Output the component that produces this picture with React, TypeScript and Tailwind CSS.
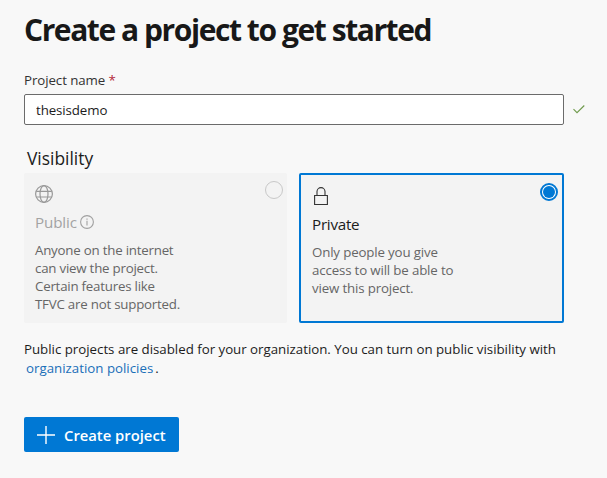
import React from 'react';

function GlobeIcon() {
  return (
    <svg width="18" height="18" viewBox="0 0 18 18" fill="none" stroke="#999999" strokeWidth="1.2">
      <circle cx="9" cy="9" r="8.4" />
      <ellipse cx="9" cy="9" rx="4" ry="8.4" />
      <path d="M1.2 6.4h15.6M1.2 12h15.6" />
    </svg>
  );
}

function InfoIcon() {
  return (
    <svg width="14" height="14" viewBox="0 0 14 14" fill="none" stroke="#a0a0a0" strokeWidth="1.1">
      <circle cx="7" cy="7" r="6.4" />
      <path d="M7 5.8v4.7M7 3.5v1.2" />
    </svg>
  );
}

function LockIcon() {
  return (
    <svg width="14" height="18" viewBox="0 0 14 18" fill="none" stroke="#333333" strokeWidth="1.1">
      <path d="M.6 8.5h12.8v9H.6zM3 8.5V4.6a4 4 0 0 1 8 0v3.9" />
    </svg>
  );
}

function CheckIcon() {
  return (
    <svg width="12" height="9" viewBox="0 0 12 9" fill="none" stroke="#6f9a4c" strokeWidth="1.1">
      <path d="M.5 4.2 4 7.7 11.3.5" />
    </svg>
  );
}

export default function App() {
  return (
    <main className="h-[478px] w-[607px] overflow-hidden whitespace-nowrap bg-[#f8f8f8] pl-6 pt-2.5 font-['Open_Sans','Noto_Sans',sans-serif] text-[13.3px] text-[#1c1c1c]">
      <h1 className="h-10 text-[30px] leading-[40px] font-bold tracking-[-1.44px] text-[#181818]">
        Create a project to get started
      </h1>
      <label htmlFor="name" className="mt-5 block h-5 leading-5 tracking-[-0.08px] text-[#333333]">
        Project name <span className="text-[#b4263a]">*</span>
      </label>
      <div className="mt-1 flex items-center gap-[9px]">
        <input
          id="name"
          defaultValue="thesisdemo"
          className="h-[31px] w-[540px] rounded-[2px] border border-[#6b6b6b] bg-white px-[11px] tracking-[-0.1px] outline-none"
        />
        <CheckIcon />
      </div>
      <h2 className="mt-5 h-7 pl-[3px] text-[17.4px] leading-[26px]">Visibility</h2>
      <div className="flex gap-3">
        <section className="flex h-[150px] w-[263px] justify-between rounded-[2px] bg-[#f3f3f3] pl-[11px] pr-1 pt-2">
          <div>
            <div className="mt-1 h-[18px]"><GlobeIcon /></div>
            <div className="mt-[9px] flex h-5 items-center gap-[3px] text-[15.2px] tracking-[-0.15px] text-[#a3a3a3]">
              <span>Public</span>
              <InfoIcon />
            </div>
            <p className="mt-[9px] leading-[18px] tracking-[-0.22px] text-[#666666]">
              Anyone on the internet<br />can view the project.<br />Certain features like<br />TFVC are not supported.
            </p>
          </div>
          <span className="h-[18px] w-[18px] rounded-full border border-[#c8c8c8]" />
        </section>
        <section className="flex h-[150px] w-[265px] justify-between rounded-[2px] border-2 border-[#0078d4] bg-[#f3f3f3] pl-[11px] pr-1 pt-2">
          <div>
            <div className="mt-1 h-[18px] pl-[2px]"><LockIcon /></div>
            <div className="mt-[9px] h-5 text-[15.2px] leading-5 tracking-[-0.25px]">Private</div>
            <p className="mt-[9px] leading-[18px] tracking-[-0.16px] text-[#666666]">
              Only people you give<br />access to will be able to<br />view this project.
            </p>
          </div>
          <span className="flex h-[18px] w-[18px] items-center justify-center rounded-full border-2 border-[#0078d4] bg-white">
            <span className="h-3 w-3 rounded-full bg-[#0078d4]" />
          </span>
        </section>
      </div>
      <p className="mt-[17px] leading-[19px]">
        <span className="tracking-[-0.015px]">Public projects are disabled for your organization. You can turn on public visibility with</span>
        <br />
        <a className="ml-[2px] text-[#1a6fb8]">organization policies</a><span className="ml-[2px]">.</span>
      </p>
      <button className="mt-[39px] flex h-[35px] w-[155px] items-center gap-[9px] rounded-[2px] bg-[#0078d4] pl-[13px] text-[14.8px] font-semibold text-white">
        <svg width="18" height="18" viewBox="0 0 18 18" stroke="white" strokeWidth="1.4">
          <path d="M9 0v18M0 9h18" />
        </svg>
        <span className="pt-px">Create project</span>
      </button>
    </main>
  );
}
